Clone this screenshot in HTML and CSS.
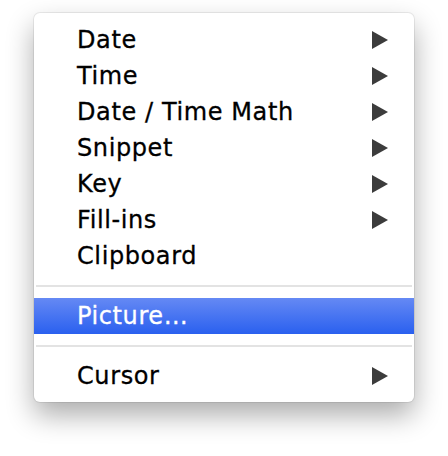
FILE: index.html
```html
<!DOCTYPE html>
<html lang="en">

<head>
    <meta charset="UTF-8">
    <title>Insert Menu</title>
    <link rel="stylesheet" href="styles.css">
</head>

<body>

    <div class="menu">
        <div class="item">Date <span class="arrow"></span></div>
        <div class="item">Time <span class="arrow"></span></div>
        <div class="item">Date / Time Math <span class="arrow"></span></div>
        <div class="item">Snippet <span class="arrow"></span></div>
        <div class="item">Key <span class="arrow"></span></div>
        <div class="item">Fill-ins <span class="arrow"></span></div>
        <div class="item">Clipboard</div>
        <div class="separator"></div>
        <div class="item selected">Picture…</div>
        <div class="separator"></div>
        <div class="item">Cursor <span class="arrow"></span></div>
    </div>

</body>

</html>
```

FILE: styles.css
```css
html {
    background-color: #fff;
}

body {
    margin: 0;
    min-height: 456px;
    box-sizing: border-box;
    padding: 13px 34px 0 34px;
    font-family: "DejaVu Sans", sans-serif;
}

.menu {
    width: 380px;
    height: 389px;
    box-sizing: border-box;
    padding: 9px 0 8px 0;
    background-color: #fff;
    border-radius: 6px;
    box-shadow: 0 0 0 1px rgba(0, 0, 0, 0.07), 0 13px 28px rgba(0, 0, 0, 0.33);
}

.item {
    height: 36px;
    display: flex;
    align-items: center;
    justify-content: space-between;
    padding: 0 26px 0 43px;
    font-size: 24px;
    letter-spacing: 0.6px;
    color: #000;
    -webkit-text-stroke: 0.3px #000;
}

.item.selected {
    color: #fff;
    -webkit-text-stroke: 0.3px #fff;
    background: linear-gradient(#6589f4, #2a60ef);
}

.arrow {
    width: 0;
    height: 0;
    border-top: 9px solid transparent;
    border-bottom: 9px solid transparent;
    border-left: 16px solid #3c3c3c;
}

.separator {
    height: 2px;
    margin: 11px 2px;
    background-color: #e3e3e3;
}
```
